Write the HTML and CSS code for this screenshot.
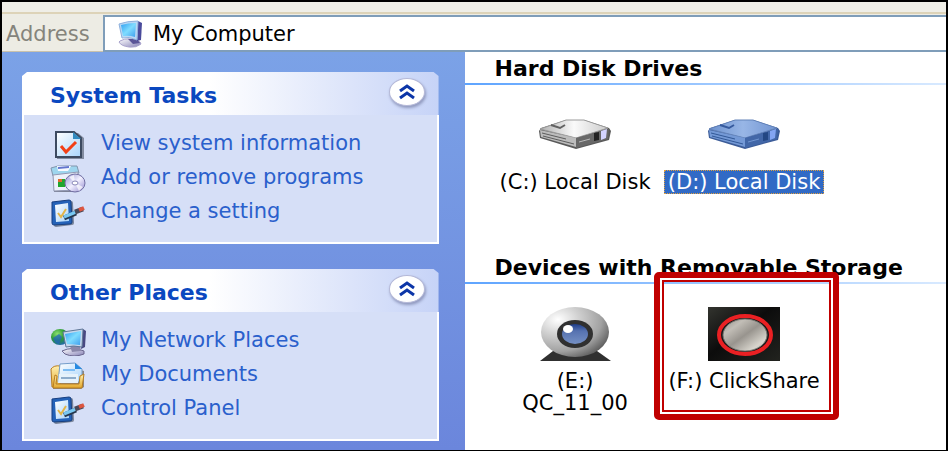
FILE: index.html
```html
<!DOCTYPE html>
<html lang="en">
<head>
<meta charset="utf-8">
<title>My Computer</title>
<link rel="stylesheet" href="styles.css">
</head>
<body>
<svg class="defs" aria-hidden="true">
  <defs>
    <linearGradient id="screen" x1="0" y1="0" x2="1" y2="1"><stop offset="0" stop-color="#2f9df0"/><stop offset=".5" stop-color="#7fdcff"/><stop offset="1" stop-color="#3f9fee"/></linearGradient>
    <linearGradient id="stand" x1="0" y1="0" x2="1" y2="1"><stop offset="0" stop-color="#ffffff"/><stop offset="1" stop-color="#8580b5"/></linearGradient>
    <linearGradient id="paper" x1="0" y1="0" x2="1" y2="1"><stop offset="0" stop-color="#ffffff"/><stop offset="1" stop-color="#a8d4fb"/></linearGradient>
    <linearGradient id="folder" x1="0" y1="0" x2="0" y2="1"><stop offset="0" stop-color="#fff0b0"/><stop offset="1" stop-color="#e3a82c"/></linearGradient>
    <linearGradient id="disc" x1="0" y1="0" x2="1" y2="1"><stop offset="0" stop-color="#8f8fd0"/><stop offset=".5" stop-color="#f2f0ff"/><stop offset="1" stop-color="#8d86cc"/></linearGradient>
    <radialGradient id="globe" cx=".35" cy=".3" r=".8"><stop offset="0" stop-color="#8be070"/><stop offset=".5" stop-color="#2c9a35"/><stop offset="1" stop-color="#1f5fc0"/></radialGradient>
    <radialGradient id="cam" cx=".25" cy=".25" r=".85"><stop offset="0" stop-color="#ffffff"/><stop offset=".35" stop-color="#d2d2d2"/><stop offset=".75" stop-color="#a2a2a2"/><stop offset="1" stop-color="#5e5e5e"/></radialGradient>
    <linearGradient id="lens" x1="0" y1="0" x2="0" y2="1"><stop offset="0" stop-color="#1e3c88"/><stop offset=".35" stop-color="#5672b0"/><stop offset="1" stop-color="#7590c4"/></linearGradient>
    <linearGradient id="knob" x1="0" y1="0" x2="1" y2="1"><stop offset="0" stop-color="#8e8b86"/><stop offset=".25" stop-color="#c2beb7"/><stop offset=".5" stop-color="#98948e"/><stop offset=".8" stop-color="#d8d5cd"/><stop offset="1" stop-color="#aaa69f"/></linearGradient>
    <linearGradient id="tile" x1="0" y1="0" x2="1" y2="1"><stop offset="0" stop-color="#33342f"/><stop offset=".45" stop-color="#0c0c0c"/><stop offset="1" stop-color="#22231f"/></linearGradient>
    <linearGradient id="drvtop" x1="0" y1="0" x2="1" y2="0"><stop offset="0" stop-color="#b0b0b0"/><stop offset=".5" stop-color="#fafafa"/><stop offset="1" stop-color="#cccccc"/></linearGradient>
    <linearGradient id="drvtopsel" x1="0" y1="0" x2="1" y2="0"><stop offset="0" stop-color="#6d92cf"/><stop offset=".5" stop-color="#98b6e6"/><stop offset="1" stop-color="#7295d2"/></linearGradient>
    <symbol id="i-control" viewBox="0 0 36 28">
      <path d="M3 4 20 1q2 0 2 2l1 20q0 2-2 2L5 27q-2 0-2-2z" fill="#303c50" opacity=".55" transform="translate(1 1)"/>
      <path d="M2 3 19 1q2 0 2 2l1 20q0 2-2 2L4 26q-2 0-2-2z" fill="#2462b8" stroke="#173f80"/>
      <path d="m5 6 13-2 1 18-13 1z" fill="url(#paper)"/>
      <path d="m8 14 3 4 5-8" fill="none" stroke="#e3b548" stroke-width="2"/>
      <path d="m14 19 12-5" stroke="#25364c" stroke-width="5"/>
      <path d="m14 18 12-5" stroke="#79c8f2" stroke-width="3"/>
      <path d="m25 13 8-3" stroke="#474858" stroke-width="5"/>
      <path d="m29 11 5-2" stroke="#dd5640" stroke-width="4"/>
    </symbol>
  </defs>
</svg>
<div class="window">
  <div class="toolbar"></div>
  <form class="address">
    <label class="address-label" for="location">Address</label>
    <div class="address-field">
      <svg class="icon-pc" viewBox="0 0 28 28" aria-hidden="true">
        <path d="M3 21q9-5 20 1l1 2q-5 4-12 3-8-1-10-5z" fill="url(#stand)" stroke="#a9a3cc"/>
        <path d="m11 19 9 0 3 4-7 1z" fill="#5b5597"/>
        <path d="m21 1 4 2-1 17-4 1z" fill="#4a4b9b"/>
        <path d="M2 4q8-3 19-3L20 20Q12 16 5 18z" fill="#b9d8f5" stroke="#8fb0dc"/>
        <path d="M4 5q7-2 15-2l-1 14q-6-2-12-1z" fill="url(#screen)"/>
      </svg>
      <input id="location" type="text" value="My Computer">
    </div>
  </form>
  <div class="main">
    <aside class="tasks">
      <section class="panel">
        <header class="panel-head">
          <h2>System Tasks</h2>
          <button class="collapse" type="button" aria-label="Collapse System Tasks"><svg viewBox="0 0 18 16"><path d="m2 7 7-5 7 5M2 14l7-5 7 5"/></svg></button>
        </header>
        <ul class="panel-list">
          <li><a href="#"><svg class="icon" viewBox="0 0 36 28" aria-hidden="true">
            <path d="M7 2h21l6 5v21H7z" fill="#4b5566" opacity=".6"/>
            <path d="M6 1h18l7 6v19H6z" fill="url(#paper)" stroke="#3d4a60" stroke-width="2"/>
            <path d="m23 1 8 7h-8z" fill="#328bc0"/>
            <path d="m11 15 5 6 10-10" fill="none" stroke="#f24016" stroke-width="3"/>
          </svg><span>View system information</span></a></li>
          <li><a href="#"><svg class="icon" viewBox="0 0 36 28" aria-hidden="true">
            <path d="M3 7h24v20H4z" fill="#55586c" opacity=".7"/>
            <path d="m1 3 7-2 19 0 2 7-26 3z" fill="#9ed5ee" stroke="#8295ac"/>
            <path d="m7 1 14 0-3 5H8z" fill="#f8faff"/><path d="m8 3 11-1" stroke="#6276ce" stroke-width="2"/>
            <path d="M3 10 28 7l-1 18-23 1z" fill="#edf1fa" stroke="#9299b4"/>
            <path d="M8 14h7v8H8z" fill="#20a52d"/><path d="M8 14h4v3H8z" fill="#e06a30"/>
            <ellipse cx="25" cy="18" rx="10" ry="9" fill="url(#disc)" stroke="#716fa3"/>
            <path d="m25 18-6-6 5-2zm0 0 8 4-4 4z" fill="#fff" opacity=".7"/>
            <ellipse cx="25" cy="18" rx="3" ry="2" fill="#fff" stroke="#8886b7"/>
          </svg><span>Add or remove programs</span></a></li>
          <li><a href="#"><svg class="icon" aria-hidden="true"><use href="#i-control"/></svg><span>Change a setting</span></a></li>
        </ul>
      </section>
      <section class="panel">
        <header class="panel-head">
          <h2>Other Places</h2>
          <button class="collapse" type="button" aria-label="Collapse Other Places"><svg viewBox="0 0 18 16"><path d="m2 7 7-5 7 5M2 14l7-5 7 5"/></svg></button>
        </header>
        <ul class="panel-list">
          <li><a href="#"><svg class="icon" viewBox="0 0 36 28" aria-hidden="true">
            <ellipse cx="10" cy="9" rx="9" ry="8" fill="url(#globe)"/>
            <path d="m3 10 6-4 3 3-3 7q-5-1-6-6" fill="#1f61c8" opacity=".7"/>
            <path d="M12 23q10-5 22 0v3q-10 4-19 0z" fill="url(#stand)" stroke="#69658d"/>
            <path d="m20 18 10 0 1 5-9 1z" fill="#8a87a9"/>
            <path d="m33 1 3 2-1 16-4 2z" fill="#484881"/>
            <path d="m13 4 20-3-1 18q-9-2-16 0z" fill="#c6d8ed" stroke="#617898"/>
            <path d="m15 6 16-3-1 14-13-1z" fill="url(#screen)"/>
          </svg><span>My Network Places</span></a></li>
          <li><a href="#"><svg class="icon" viewBox="0 0 36 28" aria-hidden="true">
            <path d="m4 6 7-3 23 6v16l-3 2H3z" fill="#685f54" opacity=".7"/>
            <path d="M1 7q3-4 9-3v20l-8 1z" fill="url(#folder)" stroke="#b77d22"/>
            <path d="M10 2 25 1l7 6v13H8z" fill="url(#paper)" stroke="#749dca"/>
            <path d="m25 1 7 6h-7z" fill="#268ae2"/>
            <path d="M13 8h12m-13 5h16" stroke="#7dbdf4" stroke-width="2"/>
            <path d="m5 13 2 1-1 8h23l1-8 4-2-2 14H3z" fill="url(#folder)" stroke="#b77d22"/>
            <path d="M9 12h19v9H8z" fill="#e6f2fb"/><path d="M11 16h15" stroke="#8eadcc" stroke-width="2"/>
          </svg><span>My Documents</span></a></li>
          <li><a href="#"><svg class="icon" aria-hidden="true"><use href="#i-control"/></svg><span>Control Panel</span></a></li>
        </ul>
      </section>
    </aside>
    <main class="content">
      <section class="group">
        <h1>Hard Disk Drives</h1>
        <div class="items">
          <a class="item" href="#">
            <svg class="pic" viewBox="0 0 74 54" aria-hidden="true">
              <path d="m1 23 2-3L28 12l18 0 25 8 2 3-2 9-33 9L2 30z" fill="#595959"/>
              <path d="m2 21 26-9h18l24 8-32 10z" fill="url(#drvtop)" stroke="#9b9b9b"/>
              <path d="m13 17 9 3 5-3" fill="none" stroke="#626262" stroke-width="2"/>
              <path d="m2 22 36 8v9L3 29z" fill="#bcbcbc"/>
              <path d="m5 28 31 8M4 25l24 6" fill="none" stroke="#5d5d5d"/>
              <path d="m38 30 33-9-1 10-32 9z" fill="#686868"/>
              <path d="m56 25 5-1v8l-5 1z" fill="#222"/><path d="m63 23 6-2-1 9-5 2z" fill="#d4d4ff"/>
              <path d="m41 34 11-3" stroke="#bbb"/>
            </svg>
            <span class="name">(C:) Local Disk</span>
          </a>
          <a class="item selected" href="#">
            <svg class="pic" viewBox="0 0 74 54" aria-hidden="true">
              <path d="m1 23 2-3L28 12l18 0 25 8 2 3-2 9-33 9L2 30z" fill="#3c5c98"/>
              <path d="m2 21 26-9h18l24 8-32 10z" fill="url(#drvtopsel)" stroke="#6383b9"/>
              <path d="m13 17 9 3 5-3" fill="none" stroke="#365a9d" stroke-width="2"/>
              <path d="m2 22 36 8v9L3 29z" fill="#7499d6"/>
              <path d="m5 28 31 8M4 25l24 6" fill="none" stroke="#315897"/>
              <path d="m38 30 33-9-1 10-32 9z" fill="#4267a8"/>
              <path d="m56 25 5-1v8l-5 1z" fill="#234783"/><path d="m63 23 6-2-1 9-5 2z" fill="#83a5f2"/>
              <path d="m41 34 11-3" stroke="#7196d2"/>
            </svg>
            <span class="name">(D:) Local Disk</span>
          </a>
        </div>
      </section>
      <section class="group">
        <h1>Devices with Removable Storage</h1>
        <div class="items">
          <a class="item" href="#">
            <svg class="pic" viewBox="0 0 74 54" aria-hidden="true">
              <path d="M15 44h44l14 10H2z" fill="#303030"/>
              <ellipse cx="37" cy="25" rx="34" ry="25" fill="url(#cam)"/>
              <ellipse cx="37" cy="27" rx="18" ry="14" fill="#303030"/>
              <ellipse cx="37" cy="27" rx="13" ry="10" fill="url(#lens)"/>
              <ellipse cx="30" cy="22" rx="5" ry="4" fill="#fff"/>
            </svg>
            <span class="name">(E:)<br>QC_11_00</span>
          </a>
          <a class="item marked" href="#">
            <svg class="pic" viewBox="0 0 74 54" aria-hidden="true">
              <path d="M1 0h72v54H1z" fill="url(#tile)"/>
              <ellipse cx="38" cy="28" rx="26" ry="19" fill="#171818" stroke="#ea2023" stroke-width="4"/>
              <ellipse cx="38" cy="28" rx="22" ry="16" fill="url(#knob)" stroke="#777570"/>
            </svg>
            <span class="name">(F:) ClickShare</span>
          </a>
        </div>
      </section>
    </main>
  </div>
</div>
</body>
</html>
```
FILE: styles.css
```css
* { box-sizing: border-box; }
body {
  margin: 0;
  font: 21px/22px "DejaVu Sans", Verdana, sans-serif;
  color: #000;
}
.defs { position: absolute; width: 0; height: 0; }
.window {
  min-height: 100vh;
  display: flex;
  flex-direction: column;
  border: 2px solid #000;
  background: #fff;
}
.toolbar {
  height: 12px;
  background: #efeee7;
  border-bottom: 2px solid #ddd3b8;
}
.address { display: flex; height: 38px; background: #edece4; }
.address-label {
  width: 101px;
  padding: 9px 0 0 4px;
  color: #85847c;
  border-bottom: 1px solid #c9c2ac;
}
.address-field {
  flex: 1;
  display: flex;
  align-items: center;
  gap: 8px;
  margin-top: 1px;
  padding-left: 12px;
  background: #fff;
  border: 2px solid #7f9db9;
  border-right: 0;
}
.icon-pc { width: 28px; height: 28px; }
.address-field input {
  flex: 1;
  min-width: 0;
  padding: 0;
  border: 0;
  outline: 0;
  background: none;
  font: inherit;
  color: #000;
}
.main { flex: 1; display: flex; }
.tasks {
  width: 49%;
  padding: 20px 26px 6px 20px;
  display: flex;
  flex-direction: column;
  gap: 25px;
  background: linear-gradient(#7ba2e7, #6b86dc);
}
.panel-head {
  display: flex;
  justify-content: space-between;
  height: 43px;
  padding: 6px 14px 0 28px;
  background: linear-gradient(90deg, #fff 45%, #c6d3f7);
  clip-path: polygon(0 4px, 5px 0, calc(100% - 5px) 0, 100% 4px, 100% 100%, 0 100%);
}
.panel-head h2 {
  margin: 0;
  padding-top: 7px;
  font-size: 22px;
  line-height: 22px;
  color: #0a48c0;
}
.collapse {
  width: 36px;
  height: 28px;
  padding: 0;
  display: grid;
  place-items: center;
  border: 1px solid #b5b9d8;
  border-radius: 50%;
  background: #fff;
  box-shadow: 1px 2px 3px #8f98bd;
}
.collapse svg { width: 18px; height: 16px; fill: none; stroke: #0c36a8; stroke-width: 3; }
.panel-list {
  list-style: none;
  margin: 0;
  padding: 16px 0 15px 26px;
  display: grid;
  gap: 6px;
  background: #d6dff7;
  border: 2px solid #fff;
  border-top: 0;
}
.panel-list a {
  display: flex;
  gap: 15px;
  height: 28px;
  color: #2a60cc;
  text-decoration: none;
}
.panel-list li { height: 28px; }
.icon { width: 36px; height: 28px; flex: none; }
.panel-list span { padding-top: 1px; white-space: nowrap; }
.content { flex: 1; min-width: 0; }
.group { height: 199px; }
.group h1 {
  margin: 0;
  height: 33px;
  padding: 6px 0 0 30px;
  font-size: 22px;
  line-height: 22px;
  white-space: nowrap;
  border-bottom: 2px solid;
  border-image: linear-gradient(90deg, #5ea4ff, #d9eaff) 1;
}
.items {
  display: grid;
  grid-template-columns: 169px 169px;
  align-items: start;
  padding: 23px 0 0 26px;
}
.item {
  position: relative;
  display: flex;
  flex-direction: column;
  align-items: center;
  gap: 8px;
  color: #000;
  text-align: center;
  text-decoration: none;
  white-space: nowrap;
}
.pic { width: 74px; height: 54px; }
.name { padding: 0 3px; border: 1px solid transparent; }
.selected .name { background: #316ac5; color: #fff; border: 1px dotted #e0a040; }
.marked::after {
  content: "";
  position: absolute;
  inset: -35px -10px -27px -6px;
  border: 6px solid #c00000;
  border-radius: 5px;
  outline: 2px solid #c00000;
  outline-offset: -10px;
  box-shadow: inset 0 0 0 2px #fff;
}
```
